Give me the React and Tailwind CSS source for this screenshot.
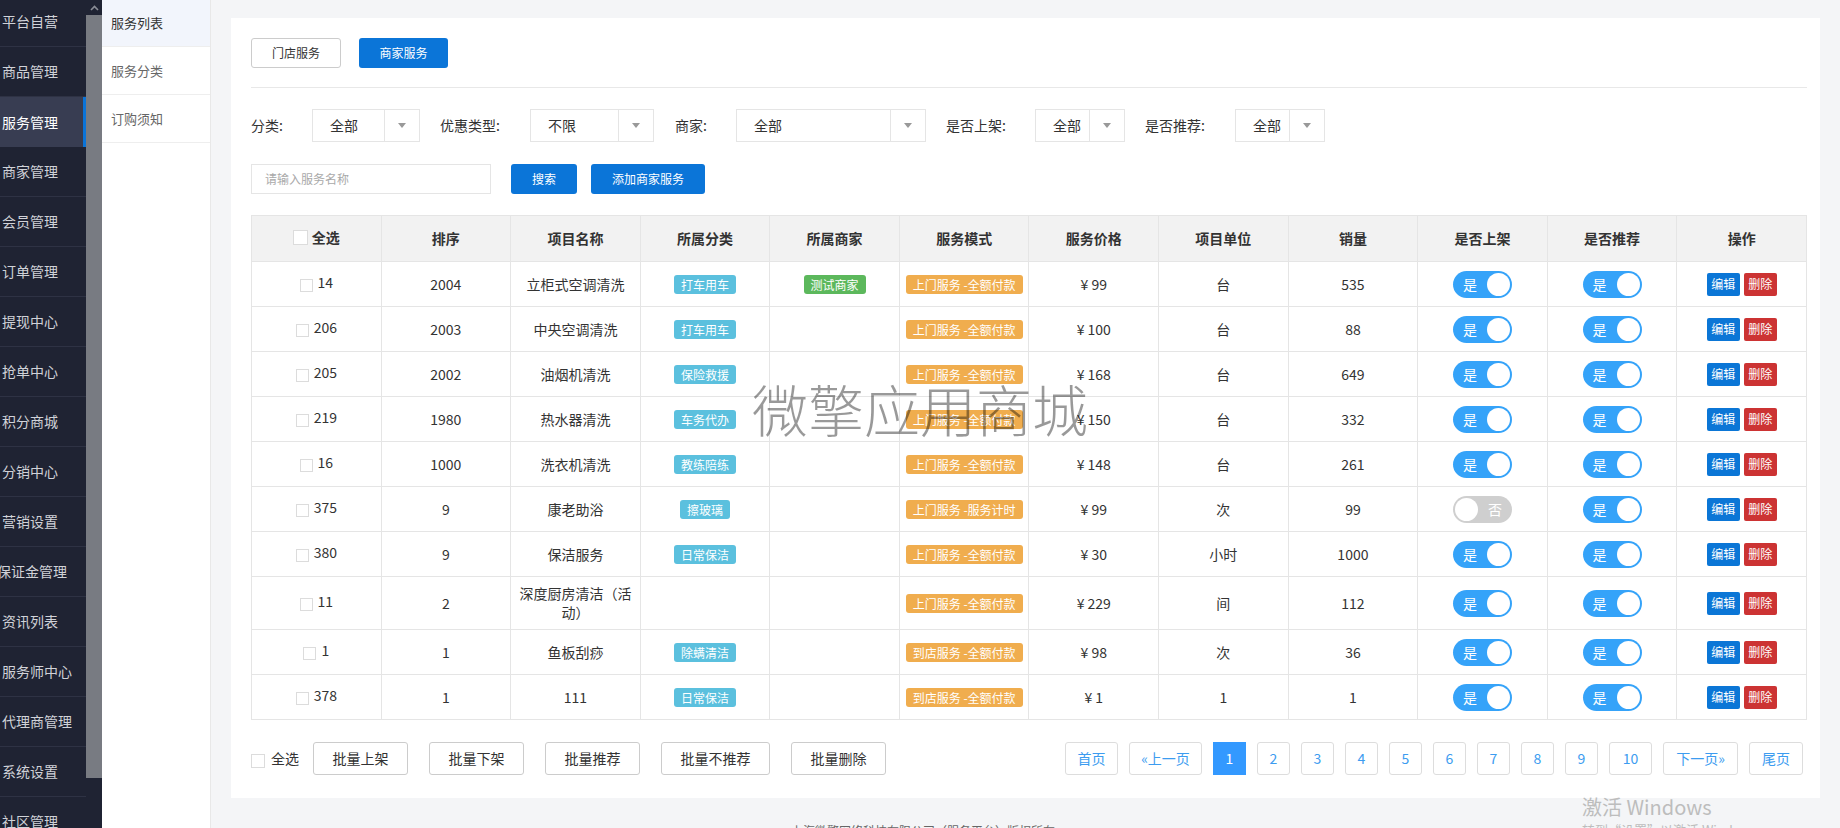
import React from "react";

const font = { fontFamily: '"Noto Sans CJK SC", "Noto Sans", "Liberation Sans", sans-serif' };

const menu = [
  "平台自营", "商品管理", "服务管理", "商家管理", "会员管理", "订单管理", "提现中心", "抢单中心",
  "积分商城", "分销中心", "营销设置", "保证金管理", "资讯列表", "服务师中心", "代理商管理", "系统设置", "社区管理",
];

const subMenu = ["服务列表", "服务分类", "订购须知"];

const rows = [
  { id: "14", sort: "2004", name: "立柜式空调清洗", cat: "打车用车", shop: "测试商家", mode: "上门服务 -全额付款", price: "99", unit: "台", sales: "535", on: true },
  { id: "206", sort: "2003", name: "中央空调清洗", cat: "打车用车", mode: "上门服务 -全额付款", price: "100", unit: "台", sales: "88", on: true },
  { id: "205", sort: "2002", name: "油烟机清洗", cat: "保险救援", mode: "上门服务 -全额付款", price: "168", unit: "台", sales: "649", on: true },
  { id: "219", sort: "1980", name: "热水器清洗", cat: "车务代办", mode: "上门服务 -全额付款", price: "150", unit: "台", sales: "332", on: true },
  { id: "16", sort: "1000", name: "洗衣机清洗", cat: "教练陪练", mode: "上门服务 -全额付款", price: "148", unit: "台", sales: "261", on: true },
  { id: "375", sort: "9", name: "康老助浴", cat: "擦玻璃", mode: "上门服务 -服务计时", price: "99", unit: "次", sales: "99", on: false },
  { id: "380", sort: "9", name: "保洁服务", cat: "日常保洁", mode: "上门服务 -全额付款", price: "30", unit: "小时", sales: "1000", on: true },
  { id: "11", sort: "2", name: "深度厨房清洁（活动）", mode: "上门服务 -全额付款", price: "229", unit: "间", sales: "112", on: true },
  { id: "1", sort: "1", name: "鱼板刮痧", cat: "除螨清洁", mode: "到店服务 -全额付款", price: "98", unit: "次", sales: "36", on: true },
  { id: "378", sort: "1", name: "111", cat: "日常保洁", mode: "到店服务 -全额付款", price: "1", unit: "1", sales: "1", on: true },
];

const headers = ["全选", "排序", "项目名称", "所属分类", "所属商家", "服务模式", "服务价格", "项目单位", "销量", "是否上架", "是否推荐", "操作"];

const Box = ({ big }) => (
  <span className={big ? "inline-block w-[15px] h-[15px] border border-[#dcdcdc] bg-white" : "inline-block w-[13px] h-[13px] border border-[#dcdcdc] bg-white mt-[7px]"} />
);

const Tag = ({ color, children }) => (
  <span className={`inline-block h-[19px] leading-[19px] px-[7px] rounded-[3px] text-[12px] text-white ${color}`}>{children}</span>
);

const Toggle = ({ on }) =>
  on ? (
    <span className="relative inline-flex items-center w-[59px] h-[27px] rounded-full bg-[#35a3f9] align-middle">
      <span className="pl-[10px] text-[14px] text-white leading-none">是</span>
      <span className="absolute right-[2px] top-[2px] w-[23px] h-[23px] rounded-full bg-white" />
    </span>
  ) : (
    <span className="relative inline-flex items-center justify-end w-[59px] h-[27px] rounded-full bg-[#cfcfcf] align-middle">
      <span className="pr-[10px] text-[14px] text-white leading-none">否</span>
      <span className="absolute left-[2px] top-[2px] w-[23px] h-[23px] rounded-full bg-white" />
    </span>
  );

const Select = ({ label, labelW, w, value }) => (
  <>
    <span className={`${labelW} shrink-0 text-[14px] text-[#333]`}>{label}</span>
    <div className={`${w} h-[33px] flex border border-[#e5e5e5] shrink-0`}>
      <div className="flex-1 flex items-center pl-[17px] text-[14px] text-[#333]">{value}</div>
      <div className="w-[35px] border-l border-[#e5e5e5] flex items-center justify-center">
        <span className="w-0 h-0 border-x-[4px] border-x-transparent border-t-[5px] border-t-[#999]" />
      </div>
    </div>
  </>
);

const pages = [
  { t: "首页", w: "w-[53px]" },
  { t: "«上一页", w: "w-[73px]" },
  { t: "1", w: "w-[33px]", active: true },
  { t: "2", w: "w-[33px]" },
  { t: "3", w: "w-[33px]" },
  { t: "4", w: "w-[33px]" },
  { t: "5", w: "w-[33px]" },
  { t: "6", w: "w-[33px]" },
  { t: "7", w: "w-[33px]" },
  { t: "8", w: "w-[33px]" },
  { t: "9", w: "w-[33px]" },
  { t: "10", w: "w-[43px]" },
  { t: "下一页»", w: "w-[75px]" },
  { t: "尾页", w: "w-[54px]" },
];

const batch = [
  { t: "批量上架", w: "w-[95px]" },
  { t: "批量下架", w: "w-[95px]" },
  { t: "批量推荐", w: "w-[95px]" },
  { t: "批量不推荐", w: "w-[109px]" },
  { t: "批量删除", w: "w-[95px]" },
];

export default function App() {
  return (
    <div style={font} className="relative w-[1840px] h-[828px] flex overflow-hidden bg-[#f4f5f7]">
      {/* main menu */}
      <div className="w-[86px] shrink-0 bg-[#1f2333] overflow-hidden">
        <div className="-mt-[3px]">
          {menu.map((m) => (
            <div
              key={m}
              className={
                m === "服务管理"
                  ? "h-[50px] flex items-center pl-[2px] bg-[#383d52] border-r-[3px] border-[#0a74d9] text-[14px] text-white whitespace-nowrap"
                  : "h-[50px] flex items-center pl-[2px] border-b border-[#2e3244] text-[14px] text-[#d0d2d8] whitespace-nowrap"
              }
            >
              <span className={m === "保证金管理" ? "-ml-[5px]" : ""}>{m}</span>
            </div>
          ))}
        </div>
      </div>

      {/* scrollbar */}
      <div className="w-[16px] shrink-0 flex flex-col bg-[#1f2333]">
        <div className="h-[15px] flex items-center justify-center">
          <svg width="9" height="6" viewBox="0 0 9 6">
            <path d="M1 5 L4.5 1.5 L8 5" fill="none" stroke="#8a8d96" strokeWidth="1.6" />
          </svg>
        </div>
        <div className="h-[763px] bg-[#787b82]" />
      </div>

      {/* sub menu */}
      <div className="w-[109px] shrink-0 bg-white border-r border-[#e8e8e8]">
        {subMenu.map((s, i) => (
          <div
            key={s}
            className={
              i === 0
                ? "h-[47px] flex items-center pl-[9px] bg-[#f2f5fc] border-b border-[#eee] text-[13px] text-[#333]"
                : "h-[48px] flex items-center pl-[9px] border-b border-[#eee] text-[13px] text-[#666]"
            }
          >
            {s}
          </div>
        ))}
      </div>

      {/* content */}
      <div className="flex-1 flex flex-col pl-[20px] pt-[18px]">
        <div className="w-[1589px] bg-white pl-[20px] pr-[13px] pt-[20px] pb-[23px]">
          <div className="flex gap-[18px]">
            <button className="w-[90px] h-[30px] border border-[#ccc] rounded-[3px] text-[12px] text-[#333] bg-white">门店服务</button>
            <button className="w-[89px] h-[30px] rounded-[3px] text-[12px] text-white bg-[#0b75d8]">商家服务</button>
          </div>
          <div className="mt-[19px] border-t border-[#e8e8e8]" />

          <div className="mt-[21px] h-[33px] flex items-center">
            <Select label="分类:" labelW="w-[61px]" w="w-[108px]" value="全部" />
            <div className="w-[20px]" />
            <Select label="优惠类型:" labelW="w-[90px]" w="w-[124px]" value="不限" />
            <div className="w-[21px]" />
            <Select label="商家:" labelW="w-[61px]" w="w-[190px]" value="全部" />
            <div className="w-[20px]" />
            <Select label="是否上架:" labelW="w-[89px]" w="w-[90px]" value="全部" />
            <div className="w-[20px]" />
            <Select label="是否推荐:" labelW="w-[90px]" w="w-[90px]" value="全部" />
          </div>

          <div className="mt-[22px] h-[30px] flex items-center">
            <div className="w-[240px] h-[30px] border border-[#e5e5e5] flex items-center pl-[13px] text-[12px] text-[#a9a9a9]">请输入服务名称</div>
            <button className="ml-[20px] w-[66px] h-[30px] rounded-[3px] bg-[#0b75d8] text-white text-[12px]">搜索</button>
            <button className="ml-[14px] w-[114px] h-[30px] rounded-[3px] bg-[#0b75d8] text-white text-[12px]">添加商家服务</button>
          </div>

          <table className="mt-[21px] w-[1556px] table-fixed border-collapse border border-[#e5e5e5] text-[14px] text-[#333]">
            <thead>
              <tr className="bg-[#f2f2f2] h-[46px]">
                {headers.map((h, i) => (
                  <th key={h} className="border border-[#e5e5e5] font-bold text-center">
                    {i === 0 ? (
                      <span className="inline-flex items-center gap-[4px]">
                        <Box big />
                        {h}
                      </span>
                    ) : (
                      h
                    )}
                  </th>
                ))}
              </tr>
            </thead>
            <tbody>
              {rows.map((r) => (
                <tr key={r.id} className="h-[45px]">
                  <td className="border border-[#e5e5e5] text-center py-[8px]">
                    <span className="inline-flex items-start gap-[5px]">
                      <Box />
                      {r.id}
                    </span>
                  </td>
                  <td className="border border-[#e5e5e5] text-center">{r.sort}</td>
                  <td className="border border-[#e5e5e5] text-center px-[8px] py-[7px] leading-[19px]">{r.name}</td>
                  <td className="border border-[#e5e5e5] text-center">{r.cat && <Tag color="bg-[#5bc0de]">{r.cat}</Tag>}</td>
                  <td className="border border-[#e5e5e5] text-center">{r.shop && <Tag color="bg-[#5cb85c]">{r.shop}</Tag>}</td>
                  <td className="border border-[#e5e5e5] text-center">
                    <Tag color="bg-[#f0ad4e]">{r.mode}</Tag>
                  </td>
                  <td className="border border-[#e5e5e5] text-center">¥ {r.price}</td>
                  <td className="border border-[#e5e5e5] text-center">{r.unit}</td>
                  <td className="border border-[#e5e5e5] text-center">{r.sales}</td>
                  <td className="border border-[#e5e5e5] text-center">
                    <Toggle on={r.on} />
                  </td>
                  <td className="border border-[#e5e5e5] text-center">
                    <Toggle on />
                  </td>
                  <td className="border border-[#e5e5e5] text-center">
                    <span className="inline-flex gap-[4px] align-middle">
                      <span className="w-[33px] h-[23px] flex items-center justify-center rounded-[2px] bg-[#0b76d6] text-white text-[12px]">编辑</span>
                      <span className="w-[33px] h-[23px] flex items-center justify-center rounded-[2px] bg-[#cc3333] text-white text-[12px]">删除</span>
                    </span>
                  </td>
                </tr>
              ))}
            </tbody>
          </table>

          <div className="mt-[22px] h-[33px] flex items-center justify-between">
            <div className="flex items-center">
              <span className="inline-block w-[14px] h-[14px] border border-[#dcdcdc] mt-[4px]" />
              <span className="ml-[6px] text-[14px] text-[#333]">全选</span>
              <div className="ml-[14px] flex gap-[21px]">
                {batch.map((b) => (
                  <button key={b.t} className={`${b.w} h-[33px] border border-[#ccc] rounded-[3px] bg-white text-[14px] text-[#333]`}>
                    {b.t}
                  </button>
                ))}
              </div>
            </div>
            <div className="flex gap-[11px] mr-[4px]">
              {pages.map((p) => (
                <span
                  key={p.t}
                  className={
                    p.active
                      ? `${p.w} h-[33px] flex items-center justify-center bg-[#3399ff] border border-[#3399ff] text-white text-[14px]`
                      : `${p.w} h-[33px] flex items-center justify-center border border-[#dddddd] rounded-[3px] text-[#3c9cf0] text-[14px]`
                  }
                >
                  {p.t}
                </span>
              ))}
            </div>
          </div>
        </div>
        <div className="mt-[24px] pl-[560px] text-[12px] text-[#666] whitespace-nowrap">上海微擎网络科技有限公司（服务平台）版权所有</div>
      </div>

      {/* watermark */}
      <div className="absolute left-[752px] top-[380px] text-[56px] font-light leading-none text-black/40 tracking-[0px] pointer-events-none whitespace-nowrap">
        微擎应用商城
      </div>
      <div className="absolute left-[1582px] top-[797px] text-[20px] text-[#bdbdbd] leading-none whitespace-nowrap" style={{ fontFamily: '"Noto Sans CJK SC", "Open Sans", sans-serif' }}>
        激活 Windows
      </div>
      <div className="absolute left-[1582px] top-[823px] text-[13px] text-[#bdbdbd] leading-none whitespace-nowrap">转到“设置”以激活 Windows。</div>
    </div>
  );
}
